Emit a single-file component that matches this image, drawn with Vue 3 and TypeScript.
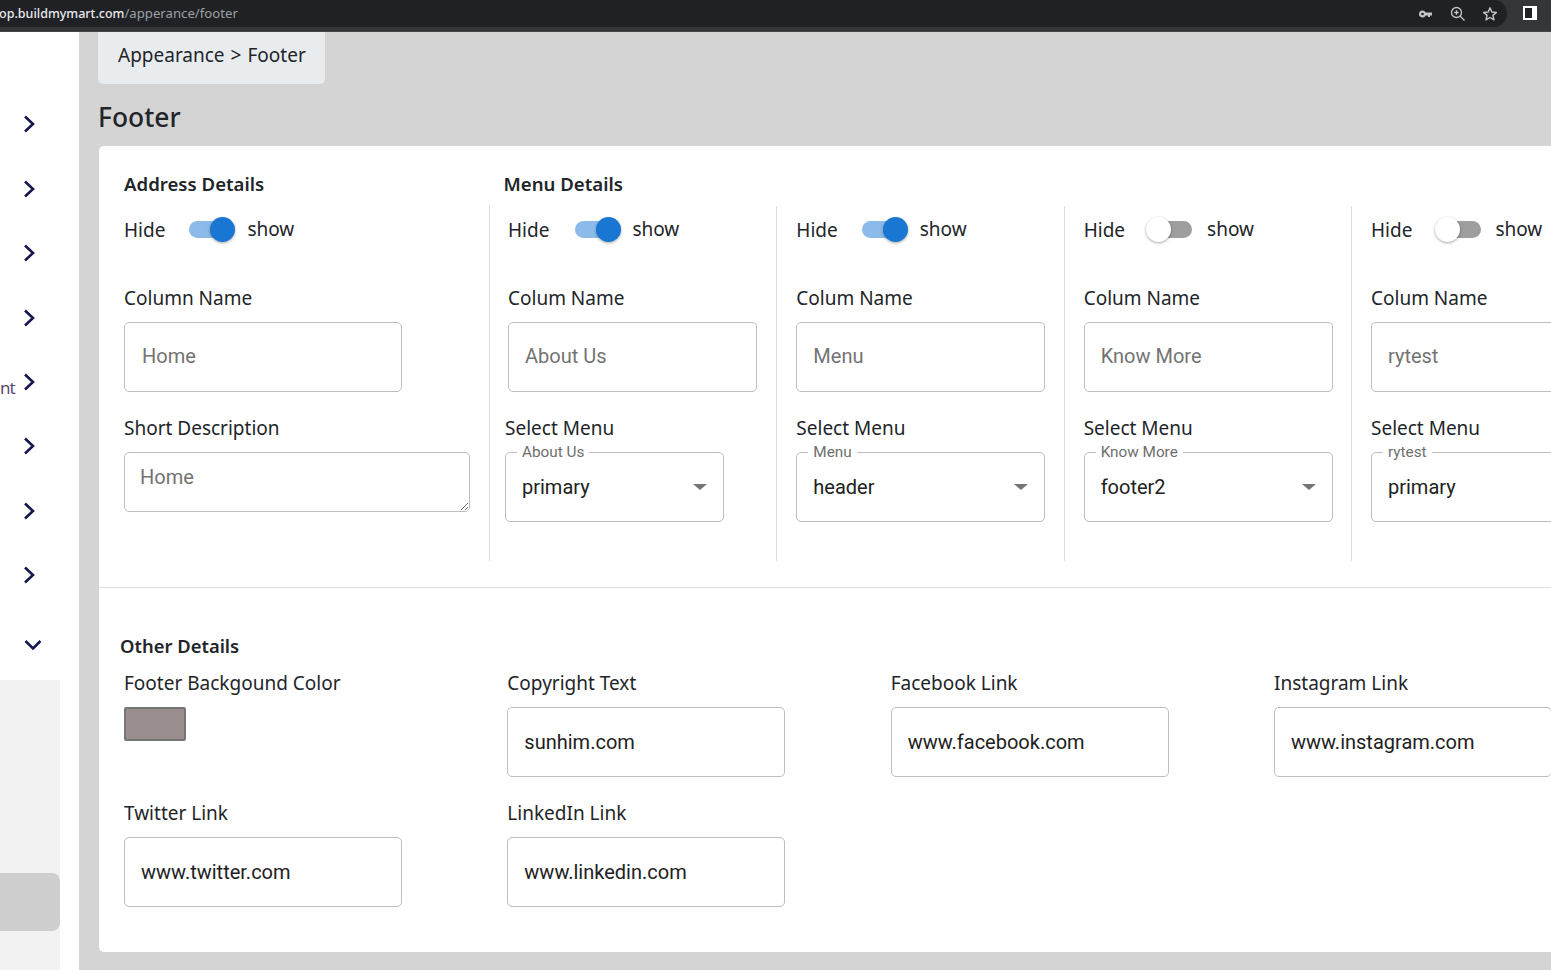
<template>
  <div class="screen">
    <header class="browser-bar">
      <div class="omnibox">
        <span class="url"><b>op.buildmymart.com</b>/apperance/footer</span>
        <svg class="bar-icon key" viewBox="0 0 16 16" width="16" height="16">
          <path d="M4.5 4.5a3.5 3.5 0 1 0 3.2 5H10v1.5h2V9.500h2V6.500H7.700a3.500 3.500 0 0 0-3.200-2zm0 2.200a1.300 1.300 0 1 1 0 2.600 1.300 1.300 0 0 1 0-2.600z" fill="#c4c7c5" fill-rule="evenodd" />
        </svg>
        <svg class="bar-icon lens" viewBox="0 0 16 16" width="16" height="16">
          <circle cx="6.500" cy="6.500" r="5" fill="none" stroke="#c4c7c5" stroke-width="1.300" />
          <path d="M10.200 10.200 14.500 14.500M4.300 6.500h4.400M6.500 4.300v4.400" stroke="#c4c7c5" stroke-width="1.300" fill="none" />
        </svg>
        <svg class="bar-icon star" viewBox="0 0 16 16" width="16" height="16">
          <path d="M8 1.800 9.800 6l4.600.4-3.500 3 1.100 4.500L8 11.500l-4 2.400 1.100-4.500-3.500-3L6.200 6z" fill="none" stroke="#c4c7c5" stroke-width="1.400" stroke-linejoin="round" />
        </svg>
      </div>
      <span class="side-panel-icon"></span>
    </header>

    <div class="layout">
      <aside class="sidebar">
        <div v-for="item in navItems" :key="item.id" class="nav-row">
          <span v-if="item.text" class="nav-text">{{ item.text }}</span>
          <svg class="chevron" viewBox="0 0 12 18" width="12" height="18">
            <path d="M2 1.500 10 9l-8 7.500" fill="none" stroke="#17174d" stroke-width="2.600" />
          </svg>
        </div>
        <div class="nav-row nav-open">
          <svg class="chevron-down" viewBox="0 0 18 12" width="18" height="12">
            <path d="M1.500 2 9 9.500 16.500 2" fill="none" stroke="#17174d" stroke-width="2.600" />
          </svg>
        </div>
        <div class="sub-panel">
          <div class="sub-active"></div>
        </div>
      </aside>

      <main class="content">
        <nav class="breadcrumb">Appearance<span class="crumb-sep">&gt;</span>Footer</nav>
        <h1 class="page-title">Footer</h1>

        <section class="card">
          <div class="card-headings">
            <h2 class="heading address-heading">Address Details</h2>
            <h2 class="heading">Menu Details</h2>
          </div>

          <div class="columns">
            <div class="column address-col">
              <div class="toggle-row">
                <span class="hide-label">Hide</span>
                <span class="switch on"><i class="track"></i><i class="thumb"></i></span>
                <span class="show-label">show</span>
              </div>
              <label class="field-label first">Column Name</label>
              <input class="text-input address-input" placeholder="Home" />
              <label class="field-label">Short Description</label>
              <textarea class="text-area" placeholder="Home"></textarea>
            </div>

            <div v-for="(menu, i) in menus" :key="menu.name" class="column menu-col" :class="{ 'first-menu': i === 0 }">
              <div class="toggle-row">
                <span class="hide-label">Hide</span>
                <span class="switch" :class="menu.on ? 'on' : 'off'"><i class="track"></i><i class="thumb"></i></span>
                <span class="show-label">show</span>
              </div>
              <label class="field-label first">Colum Name</label>
              <input class="text-input menu-input" :placeholder="menu.name" />
              <label class="field-label" :class="{ shifted: i === 0 }">Select Menu</label>
              <div class="select" :class="{ narrow: i === 0 }">
                <span class="select-legend">{{ menu.name }}</span>
                <span class="select-value">{{ menu.value }}</span>
                <span class="select-arrow"></span>
              </div>
            </div>
          </div>

          <div class="other">
            <h2 class="heading other-heading">Other Details</h2>
            <div class="other-grid">
              <div class="other-field">
                <label class="field-label flush">Footer Backgound Color</label>
                <div class="swatch"></div>
              </div>
              <div v-for="link in links" :key="link.label" class="other-field">
                <label class="field-label flush">{{ link.label }}</label>
                <input class="text-input link-input" :value="link.value" />
              </div>
            </div>
          </div>
        </section>
      </main>
    </div>
  </div>
</template>

<script setup lang="ts">
const navItems = [
  { id: 1, text: "" },
  { id: 2, text: "" },
  { id: 3, text: "" },
  { id: 4, text: "" },
  { id: 5, text: "nt" },
  { id: 6, text: "" },
  { id: 7, text: "" },
  { id: 8, text: "" },
];

const menus = [
  { name: "About Us", value: "primary", on: true },
  { name: "Menu", value: "header", on: true },
  { name: "Know More", value: "footer2", on: false },
  { name: "rytest", value: "primary", on: false },
];

const links = [
  { label: "Copyright Text", value: "sunhim.com" },
  { label: "Facebook Link", value: "www.facebook.com" },
  { label: "Instagram Link", value: "www.instagram.com" },
  { label: "Twitter Link", value: "www.twitter.com" },
  { label: "LinkedIn Link", value: "www.linkedin.com" },
];
</script>

<style>
html,
body {
  margin: 0;
  overflow: hidden;
}
</style>

<style scoped>
.screen {
  width: 1551px;
  height: 970px;
  overflow: hidden;
  display: flex;
  flex-direction: column;
  font-family: "Noto Sans", "Open Sans", sans-serif;
  color: #212529;
  background: #d4d4d4;
}

.browser-bar {
  height: 32px;
  flex-shrink: 0;
  display: flex;
  align-items: flex-start;
  background: #35363a;
  border-bottom: 1px solid #45464a;
  box-sizing: border-box;
}

.omnibox {
  width: 1507px;
  height: 27px;
  display: flex;
  align-items: center;
  background: #202124;
  border-radius: 0 14px 14px 0;
}

.url {
  flex: 1;
  margin: -1px 0 0 -1px;
  font-size: 13.2px;
  color: #9aa0a6;
  white-space: nowrap;
}

.url b {
  font-size: 12.5px;
  font-weight: 500;
  color: #e8eaed;
}

.bar-icon {
  display: block;
  flex-shrink: 0;
}

.key {
  margin-right: 16px;
}

.lens {
  margin-right: 16px;
}

.star {
  margin-right: 9px;
}

.side-panel-icon {
  width: 14px;
  height: 14px;
  margin: 6px 0 0 16px;
  box-sizing: border-box;
  border: 2px solid #fff;
  border-left-width: 2px;
  border-right-width: 5px;
  background: #202124;
}

.layout {
  flex: 1;
  display: flex;
  min-height: 0;
}

.sidebar {
  width: 79px;
  flex-shrink: 0;
  background: #fff;
  padding-top: 60.2px;
  box-sizing: border-box;
  overflow: hidden;
}

.nav-row {
  height: 64.4px;
  display: flex;
  align-items: center;
  padding-left: 23px;
  position: relative;
}

.nav-text {
  position: absolute;
  left: 0;
  top: 26px;
  font-size: 17px;
  letter-spacing: -1px;
  line-height: 24px;
  color: #5a4a72;
}

.chevron {
  display: block;
}

.nav-open {
  height: 64px;
  margin-top: 6px;
}

.chevron-down {
  display: block;
  margin-left: 1px;
}

.sub-panel {
  width: 60px;
  height: 290px;
  margin-top: 2.8px;
  padding-top: 193px;
  box-sizing: border-box;
  background: #f2f2f2;
}

.sub-active {
  height: 58px;
  background: #d0cfd0;
  border-radius: 0 8px 8px 0;
}

.content {
  flex: 1;
  min-width: 0;
  padding-left: 20px;
}

.breadcrumb {
  width: 227px;
  height: 52px;
  margin-left: -1px;
  padding-left: 20px;
  box-sizing: border-box;
  line-height: 46px;
  font-size: 19px;
  background: #e9ecef;
  border-radius: 0 0 5px 5px;
}

.crumb-sep {
  margin: 0 6px;
}

.page-title {
  margin: 14px 0 10px -1px;
  height: 38px;
  font-size: 26.4px;
  line-height: 38px;
  font-weight: 500;
}

.card {
  width: 1600px;
  height: 806px;
  background: #fff;
  border-radius: 5px 0 0 5px;
  box-sizing: border-box;
  padding-top: 26px;
}

.card-headings {
  display: flex;
  height: 24px;
  margin-bottom: 10px;
  padding-left: 25px;
}

.heading {
  margin: 0;
  font-size: 18.6px;
  line-height: 24px;
  font-weight: 600;
}

.address-heading {
  width: 379.5px;
}

.columns {
  display: grid;
  grid-template-columns: 390px repeat(4, 287.33px);
  height: 355px;
}

.column {
  box-sizing: border-box;
  min-width: 0;
}

.address-col {
  padding-left: 25px;
}

.menu-col {
  border-left: 1px solid #dcdcdc;
  padding-left: 19px;
}

.first-menu {
  padding-left: 18px;
}

.toggle-row {
  height: 46px;
  display: flex;
  align-items: center;
  font-size: 19px;
}

.hide-label {
  position: relative;
  top: 1px;
}

.show-label {
  line-height: 24px;
}

.switch {
  position: relative;
  width: 46px;
  height: 25px;
  margin: 0 12px 0 24px;
}

.switch.off {
  margin: 0 15px 0 21px;
}

.first-menu .switch {
  margin: 0 11px 0 26px;
}

.menu-col:last-child .switch.off {
  margin: 0 14px 0 23px;
}

.track {
  position: absolute;
  top: 4px;
  height: 17px;
  border-radius: 9px;
}

.thumb {
  position: absolute;
  top: 0;
  width: 25px;
  height: 25px;
  border-radius: 50%;
  box-shadow: 0 1px 3px rgba(0, 0, 0, 0.35);
}

.on .track {
  left: 0;
  width: 43px;
  background: #8cbbe9;
}

.on .thumb {
  right: 0;
  background: #1976d2;
}

.off .track {
  right: 0;
  width: 42px;
  background: #9e9e9e;
}

.off .thumb {
  left: 0;
  background: #fff;
}

.field-label {
  display: block;
  height: 24px;
  margin: 24px 0 12px;
  font-size: 19px;
  line-height: 24px;
}

.field-label.first {
  margin-top: 34px;
}

.field-label.flush {
  margin-top: 0;
}

.field-label.shifted {
  margin-left: -3px;
}

.text-input {
  display: block;
  height: 70px;
  box-sizing: border-box;
  padding: 0 16px 1px;
  border: 1px solid #bdbdbd;
  border-radius: 5px;
  outline: none;
  background: #fff;
  font-family: Roboto, "Liberation Sans", sans-serif;
  font-size: 20px;
  color: #212121;
}

.text-input::placeholder,
.text-area::placeholder {
  color: #737373;
  opacity: 1;
}

.address-input {
  width: 278px;
  padding: 0 16px 3px 17px;
}

.menu-input {
  width: 249px;
  padding-bottom: 3px;
}

.link-input {
  width: 278px;
}

.text-area {
  display: block;
  width: 346px;
  height: 60px;
  box-sizing: border-box;
  padding: 12px 15px;
  border: 1px solid #bdbdbd;
  border-radius: 5px;
  outline: none;
  font-family: Roboto, "Liberation Sans", sans-serif;
  font-size: 20px;
  line-height: 24px;
  color: #212121;
}

.select {
  position: relative;
  width: 249px;
  height: 70px;
  box-sizing: border-box;
  display: flex;
  align-items: center;
  padding-left: 16px;
  border: 1px solid #bdbdbd;
  border-radius: 5px;
  font-family: Roboto, "Liberation Sans", sans-serif;
}

.select.narrow {
  width: 219px;
  margin-left: -3px;
}

.select-legend {
  position: absolute;
  left: 11px;
  top: -10px;
  padding: 0 5px;
  background: #fff;
  font-size: 15.3px;
  line-height: 18px;
  color: #6e6e6e;
}

.select-value {
  font-size: 20px;
  color: #212121;
}

.select-arrow {
  position: absolute;
  right: 16px;
  top: 31px;
  width: 0;
  height: 0;
  border-left: 7px solid transparent;
  border-right: 7px solid transparent;
  border-top: 6px solid #757575;
}

.other {
  margin-top: 26px;
  border-top: 1px solid #e0e0e0;
  padding: 46px 0 0 25px;
}

.other-heading {
  margin: 0 0 13px -4px;
  font-size: 18.4px;
}

.other-grid {
  display: grid;
  grid-template-columns: repeat(4, 383.33px);
  row-gap: 24px;
}

.swatch {
  width: 62px;
  height: 34px;
  box-sizing: border-box;
  background: #9a8f8f;
  border: 2px solid #767676;
  border-radius: 2px;
}
</style>
